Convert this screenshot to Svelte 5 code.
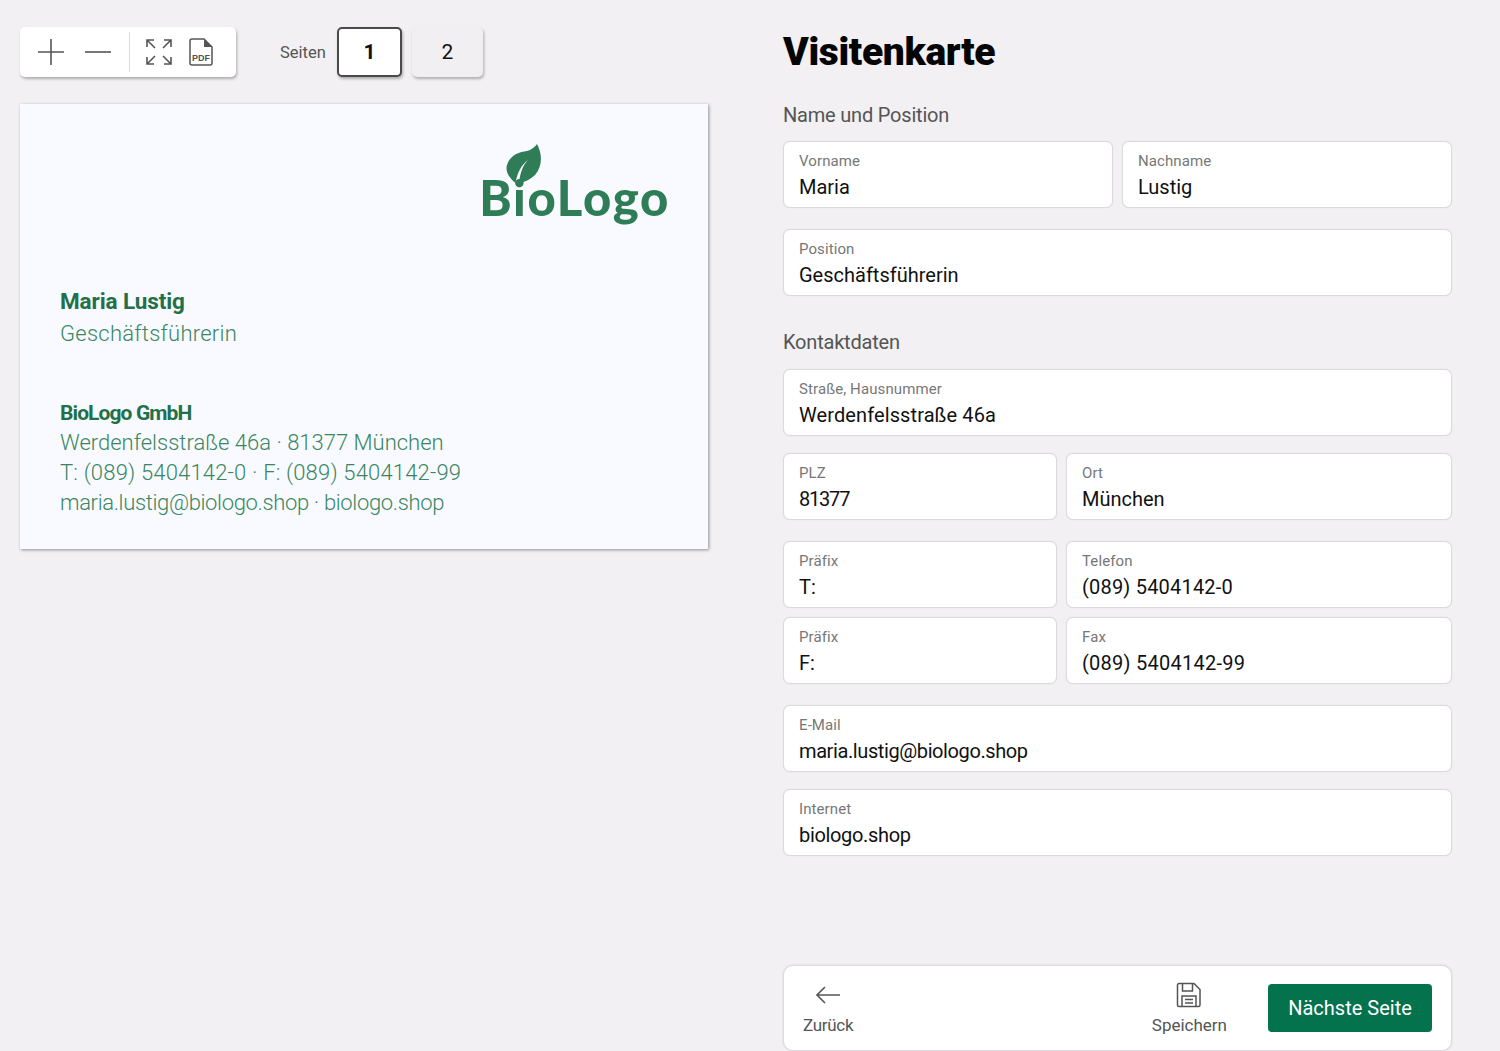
<script>
    const rows = [
        { gap: 0, fields: [{ label: 'Vorname', value: 'Maria' }, { label: 'Nachname', value: 'Lustig' }], cols: 'even' },
        { gap: 21, fields: [{ label: 'Position', value: 'Geschäftsführerin' }] }
    ];
    // track nudges the letter spacing of a value so its width fits the design
    const contact = [
        { gap: 0, fields: [{ label: 'Straße, Hausnummer', value: 'Werdenfelsstraße 46a', track: 0.1 }] },
        { gap: 17, cols: 'split', fields: [{ label: 'PLZ', value: '81377', track: -1.2 }, { label: 'Ort', value: 'München' }] },
        { gap: 21, cols: 'split', fields: [{ label: 'Präfix', value: 'T:' }, { label: 'Telefon', value: '(089) 5404142-0', track: 0.2 }] },
        { gap: 9, cols: 'split', fields: [{ label: 'Präfix', value: 'F:' }, { label: 'Fax', value: '(089) 5404142-99', track: 0.25 }] },
        { gap: 21, fields: [{ label: 'E-Mail', value: 'maria.lustig@biologo.shop', track: -0.4 }] },
        { gap: 17, fields: [{ label: 'Internet', value: 'biologo.shop', track: -0.33 }] }
    ];
</script>

{#snippet formRow(row)}
    <div class="row {row.cols || ''}" style="margin-top: {row.gap}px">
        {#each row.fields as field}
            <div class="field">
                <span class="field-label">{field.label}</span>
                <span class="field-value" style="letter-spacing: {field.track || 0}px">{field.value}</span>
            </div>
        {/each}
    </div>
{/snippet}

<div class="page">
    <div class="preview">
        <div class="top-controls">
            <div class="toolbar">
                <button class="tool zoom-tool" aria-label="Vergrößern">
                    <svg width="28" height="28" viewBox="0 0 28 28"><path d="M14 1v26M1 14h26" stroke="#555" stroke-width="1.6" fill="none"/></svg>
                </button>
                <button class="tool zoom-tool" aria-label="Verkleinern">
                    <svg width="28" height="28" viewBox="0 0 28 28"><path d="M1 14h26" stroke="#555" stroke-width="1.6" fill="none"/></svg>
                </button>
                <span class="divider"></span>
                <button class="tool" aria-label="Vollbild">
                    <svg width="26" height="26" viewBox="0 0 26 26" fill="none" stroke="#555" stroke-width="1.6">
                        <path d="M1 8V1h7M1 1l8 8M18 1h7v7M25 1l-8 8M1 18v7h7M1 25l8-8M18 25h7v-7M25 25l-8-8"/>
                    </svg>
                </button>
                <button class="tool" aria-label="PDF">
                    <svg width="26" height="28" viewBox="0 0 26 28" fill="none">
                        <path d="M2 3a2 2 0 0 1 2-2h12l8 8v16a2 2 0 0 1-2 2h-18a2 2 0 0 1-2-2z" stroke="#555" stroke-width="1.5"/>
                        <path d="M16 1v8h8z" fill="#555"/>
                        <text x="13" y="23" text-anchor="middle" class="pdf-text">PDF</text>
                    </svg>
                </button>
            </div>
            <span class="pages-label">Seiten</span>
            <button class="page-btn active">1</button>
            <button class="page-btn second">2</button>
        </div>

        <div class="card">
            <div class="logo">
                <div class="logo-text">BioLogo</div>
                <svg class="leaf" width="38" height="42" viewBox="0 0 38 42">
                    <path d="M32 1C38 12 37 24 30 32C26 36 20 39 14 40C15 30 18 22 23 17C16 22 12 31 10.500 40C4 35 0 28 2 22C5 12 14 9 22 8C26 7 30 4 32 1Z" fill="#2f7d57"/>
                </svg>
            </div>
            <div class="person-name">Maria Lustig</div>
            <div class="card-line person-pos">Geschäftsführerin</div>
            <div class="company">BioLogo GmbH</div>
            <div class="card-line">Werdenfelsstraße 46a · 81377 München</div>
            <div class="card-line phone">T: (089) 5404142-0 · F: (089) 5404142-99</div>
            <div class="card-line web">maria.lustig@biologo.shop · biologo.shop</div>
        </div>
    </div>

    <div class="form-side">
        <h1>Visitenkarte</h1>
        <h2>Name und Position</h2>
        {#each rows as row}
            {@render formRow(row)}
        {/each}
        <h2 class="contact-title">Kontaktdaten</h2>
        {#each contact as row}
            {@render formRow(row)}
        {/each}

        <div class="bottom-bar">
            <button class="bar-action back">
                <svg width="26" height="26" viewBox="0 0 26 26" fill="none" stroke="#555" stroke-width="1.6"><path d="M25 13H2M10 5l-8 8 8 8"/></svg>
                <span>Zurück</span>
            </button>
            <button class="bar-action save">
                <svg width="26" height="26" viewBox="0 0 26 26" fill="none" stroke="#555" stroke-width="1.5">
                    <path d="M3 1.500h15l6 6v15.500a1.500 1.500 0 0 1-1.500 1.500h-19.500a1.500 1.500 0 0 1-1.500-1.500v-20a1.500 1.500 0 0 1 1.500-1.500z"/>
                    <path d="M6.500 1.500v7.500h10v-7.500M6 24.500v-10.500h14v10.500M9 17.500h8M9 21h8"/>
                </svg>
                <span>Speichern</span>
            </button>
            <button class="next">Nächste Seite</button>
        </div>
    </div>
</div>

<style>
    :global(body) {
        background: #f2f0f2;
        overflow: hidden;
    }

    .page {
        display: flex;
        height: 1051px;
        overflow: hidden;
        font-family: Roboto, "Liberation Sans", sans-serif;
        color: #555;
    }

    button {
        font-family: inherit;
        background: none;
        border: none;
        padding: 0;
    }

    .preview {
        width: 709px;
        margin-left: 20px;
        padding-top: 27px;
        flex: none;
    }

    .top-controls {
        display: flex;
        align-items: center;
        height: 50px;
    }

    .toolbar {
        display: flex;
        align-items: center;
        width: 216px;
        height: 50px;
        box-sizing: border-box;
        padding-left: 17px;
        background: #fff;
        border-radius: 5px;
        box-shadow: 1px 2px 3px rgba(0, 0, 0, 0.28);
    }

    .tool {
        display: flex;
    }

    .zoom-tool + .zoom-tool {
        margin-left: 19px;
    }

    .divider {
        width: 1px;
        height: 40px;
        background: #ddd;
        margin: 0 16px 0 17px;
    }

    .tool:last-child {
        margin-left: 16px;
    }

    .pdf-text {
        font-family: "Liberation Sans", sans-serif;
        font-size: 9px;
        font-weight: 700;
        fill: #555;
    }

    .pages-label {
        margin-left: 44px;
        width: 57px;
        font-size: 16.500px;
        color: #555;
    }

    .page-btn {
        height: 50px;
        border-radius: 5px;
        font-size: 21px;
        color: #111;
        box-shadow: 1px 2px 3px rgba(0, 0, 0, 0.28);
    }

    .active {
        width: 65px;
        box-sizing: border-box;
        background: #fff;
        border: 2px solid #4a4a4a;
        font-weight: 700;
    }

    .second {
        width: 71px;
        margin-left: 10px;
        background: #f1eff1;
    }

    .card {
        display: flex;
        flex-direction: column;
        width: 688px;
        height: 445px;
        box-sizing: border-box;
        margin-top: 27px;
        padding: 39px 40px 0 40px;
        background: #f9faff;
        box-shadow: 1px 1px 3px rgba(0, 0, 0, 0.4);
        color: #3a8661;
    }

    .logo {
        display: flex;
        flex-direction: column;
        align-self: flex-end;
        height: 143px;
        margin-right: -2px;
    }

    .leaf {
        order: -1;
        margin-left: 26px;
        margin-bottom: -14px;
    }

    .logo-text {
        font-family: Lato, sans-serif;
        font-weight: 900;
        font-size: 49px;
        line-height: 52px;
        letter-spacing: 1.700px;
        color: #2f7d57;
    }

    .person-name,
    .company {
        font-size: 22.500px;
        font-weight: 700;
        line-height: 30px;
        letter-spacing: -0.100px;
        color: #1f7149;
    }

    .company {
        margin-top: 50px;
        font-size: 21px;
        line-height: 29px;
        letter-spacing: -0.900px;
    }

    .person-pos {
        margin-top: 3px;
        letter-spacing: 0.250px;
    }

    .card-line {
        font-size: 22px;
        font-weight: 300;
        line-height: 30px;
        white-space: nowrap;
    }

    .phone {
        letter-spacing: 0.180px;
    }

    .web {
        letter-spacing: -0.350px;
    }

    .form-side {
        display: flex;
        flex-direction: column;
        width: 669px;
        margin-left: 54px;
    }

    h1 {
        margin: 28px 0 0;
        font-size: 39px;
        font-weight: 900;
        line-height: 48px;
        letter-spacing: -0.350px;
        color: #050505;
    }

    h2 {
        margin: 24px 0 11px;
        font-size: 20px;
        font-weight: 400;
        line-height: 30px;
        letter-spacing: -0.200px;
        color: #555;
    }

    .contact-title {
        margin: 31px 0 12px;
    }

    .row {
        display: grid;
        grid-template-columns: 1fr;
        gap: 9px;
    }

    .even {
        grid-template-columns: 1fr 1fr;
    }

    .split {
        grid-template-columns: 274px 1fr;
    }

    .field {
        display: flex;
        flex-direction: column;
        box-sizing: border-box;
        height: 67px;
        padding: 10px 15px 0;
        background: #fff;
        border: 1px solid #dcdadc;
        border-radius: 7px;
        box-shadow: 0 0 1px rgba(0, 0, 0, 0.12);
    }

    .field-label {
        font-size: 15px;
        line-height: 19px;
        letter-spacing: 0.100px;
        color: #777;
    }

    .field-value {
        margin-top: 3px;
        font-size: 20px;
        line-height: 26px;
        color: #111;
    }

    .bottom-bar {
        display: flex;
        align-items: center;
        flex: none;
        height: 86px;
        box-sizing: border-box;
        margin-top: 109px;
        padding: 0 19px;
        background: #fff;
        border: 1px solid #dedcde;
        border-radius: 10px;
        box-shadow: 0 0 2px rgba(0, 0, 0, 0.15);
    }

    .bar-action {
        display: flex;
        flex-direction: column;
        align-items: center;
        gap: 7px;
        font-size: 17px;
        line-height: 20px;
        color: #555;
    }

    .back {
        letter-spacing: -0.300px;
    }

    .save {
        margin-left: auto;
        margin-right: 41px;
    }

    .next {
        width: 164px;
        height: 48px;
        background: #04724d;
        border-radius: 4px;
        font-size: 20px;
        color: #fff;
    }
</style>
